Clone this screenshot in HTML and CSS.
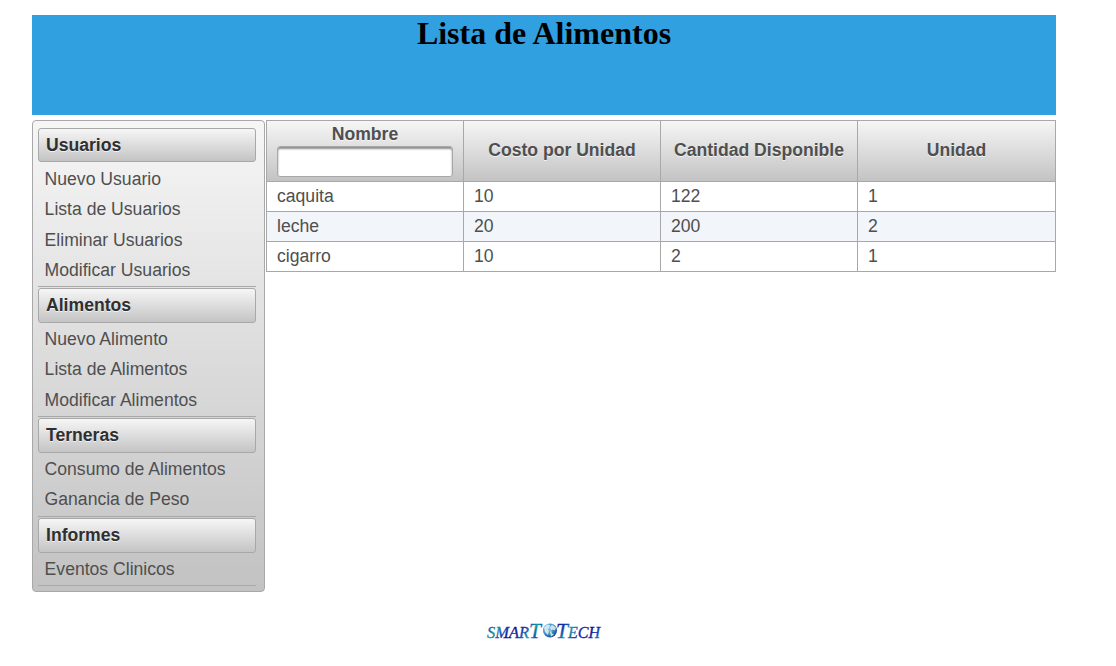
FILE: index.html
```html
<!DOCTYPE html>
<html lang="es">
<head>
<meta charset="utf-8">
<title>Lista de Alimentos</title>
<link rel="stylesheet" href="styles.css">
</head>
<body>
<div class="page">
  <header class="banner"><h1>Lista de Alimentos</h1></header>
  <div class="content">
    <nav class="menu">
      <section class="group">
        <h3>Usuarios</h3>
        <ul class="four"><li>Nuevo Usuario</li><li>Lista de Usuarios</li><li>Eliminar Usuarios</li><li>Modificar Usuarios</li></ul>
      </section>
      <section class="group">
        <h3>Alimentos</h3>
        <ul class="three"><li>Nuevo Alimento</li><li>Lista de Alimentos</li><li>Modificar Alimentos</li></ul>
      </section>
      <section class="group">
        <h3>Terneras</h3>
        <ul class="two"><li>Consumo de Alimentos</li><li>Ganancia de Peso</li></ul>
      </section>
      <section class="group">
        <h3>Informes</h3>
        <ul class="one"><li>Eventos Clinicos</li></ul>
      </section>
    </nav>
    <table class="foods">
      <colgroup><col class="c"><col class="c"><col class="c"><col class="last"></colgroup>
      <thead>
        <tr><th class="filtered"><label for="name">Nombre</label><input id="name" type="text"></th><th>Costo por Unidad</th><th>Cantidad Disponible</th><th>Unidad</th></tr>
      </thead>
      <tbody>
        <tr><td>caquita</td><td>10</td><td>122</td><td>1</td></tr>
        <tr><td>leche</td><td>20</td><td>200</td><td>2</td></tr>
        <tr><td>cigarro</td><td>10</td><td>2</td><td>1</td></tr>
      </tbody>
    </table>
  </div>
  <footer class="footer">
    <svg class="logo" width="118" height="26" viewBox="0 0 118 26">
      <defs>
        <linearGradient id="ink" x1="0" y1="0" x2="12" y2="9" gradientUnits="userSpaceOnUse" spreadMethod="reflect">
          <stop offset="0" stop-color="#0a0f86"/><stop offset=".55" stop-color="#1440b4"/><stop offset="1" stop-color="#10a09c"/>
        </linearGradient>
        <radialGradient id="sea" cx=".35" cy=".35" r=".75">
          <stop offset="0" stop-color="#a9d4ee"/><stop offset=".55" stop-color="#3b91cb"/><stop offset="1" stop-color="#123d7c"/>
        </radialGradient>
      </defs>
      <g fill="url(#ink)" stroke="url(#ink)" stroke-width=".3">
        <text x="2" y="19" font-size="16" textLength="42" lengthAdjust="spacingAndGlyphs">SMAR</text>
        <text x="44" y="19" font-size="21.5">T</text>
        <text x="71" y="19" font-size="21.5">T</text>
        <text x="83" y="19" font-size="16" textLength="32" lengthAdjust="spacingAndGlyphs">ECH</text>
      </g>
      <circle cx="65" cy="11.5" r="7" fill="url(#sea)"/>
      <path d="M59 8.5l3-3 3 .5-1 3-2 1 2 2-1 4-3-3zM67 5.500l4 3-1 3-2-1-2 1 1 3 2 1-3 2-1-4 1-3-1-2z" fill="#e5eff0" opacity=".85"/>
    </svg>
  </footer>
</div>
</body>
</html>
```

FILE: styles.css
```css
* { box-sizing: border-box; }
body { margin: 0; background: #fff; font: 17.6px "Liberation Sans", Arial, sans-serif; color: #4f4f4f; }
.page { width: 1024px; margin: 0 0 0 32px; padding-top: 15px; }
.banner { height: 100px; background: #30a0e0; }
.banner h1 { margin: 0; color: #000; font: bold 32px/36px "Liberation Serif", "Times New Roman", serif; text-align: center; }
.content { display: flex; align-items: flex-start; gap: 1px; padding-top: 5px; }
.menu { width: 233px; height: 472px; padding: 7px 8px 0 5px; border: 1px solid #a8a8a8; border-radius: 4px; background: linear-gradient(#f6f6f6, #c2c2c2); }
.group { margin-bottom: 1px; }
.group h3 { height: 35px; margin: 0; padding-left: 7px; border: 1px solid #a8a8a8; border-radius: 3px; background: linear-gradient(#f6f6f6, #c4c4c4); color: #2e2f30; font-size: 17.6px; line-height: 33px; text-shadow: 0 1px 0 rgba(255,255,255,.7); }
.group:first-child h3 { height: 34px; line-height: 32px; }
.group ul { margin: 0; padding: .8px 0 0 6.6px; border-bottom: 1px solid #a8a8a8; list-style: none; }
.group li { height: 30.4px; line-height: 31px; white-space: nowrap; }
.group .four { height: 125px; padding-top: 1.8px; }
.group .three { height: 94px; }
.group .two { height: 64px; }
.group .one { height: 33px; }
.foods { width: 790px; border-collapse: collapse; table-layout: fixed; }
.foods .c { width: 197px; }
.foods .last { width: 198px; }
.foods th, .foods td { border: 1px solid #a8a8a8; }
.foods thead tr { height: 61px; background: linear-gradient(#f6f6f6, #c2c2c2); }
.foods th { padding: 0 0 2px; text-align: center; vertical-align: middle; line-height: 20px; text-shadow: 0 1px 0 rgba(255,255,255,.7); white-space: nowrap; }
.foods .filtered { padding: 3px 10px 4px; vertical-align: top; }
.filtered label, .filtered input { display: block; }
.filtered input { width: 176px; height: 31px; margin-top: 2px; border: 1px solid #a8a8a8; border-radius: 3px; background: #fff; box-shadow: inset 0 2px 2px #8f8f8f; }
.foods td { height: 30px; padding: 0 10px 2px; line-height: 26px; }
.foods tbody tr:nth-child(even) { background: #f2f5f9; }
.footer { display: flex; justify-content: center; margin-top: 27px; }
.logo { font-family: "Liberation Serif", "Times New Roman", serif; font-style: italic; }
```
